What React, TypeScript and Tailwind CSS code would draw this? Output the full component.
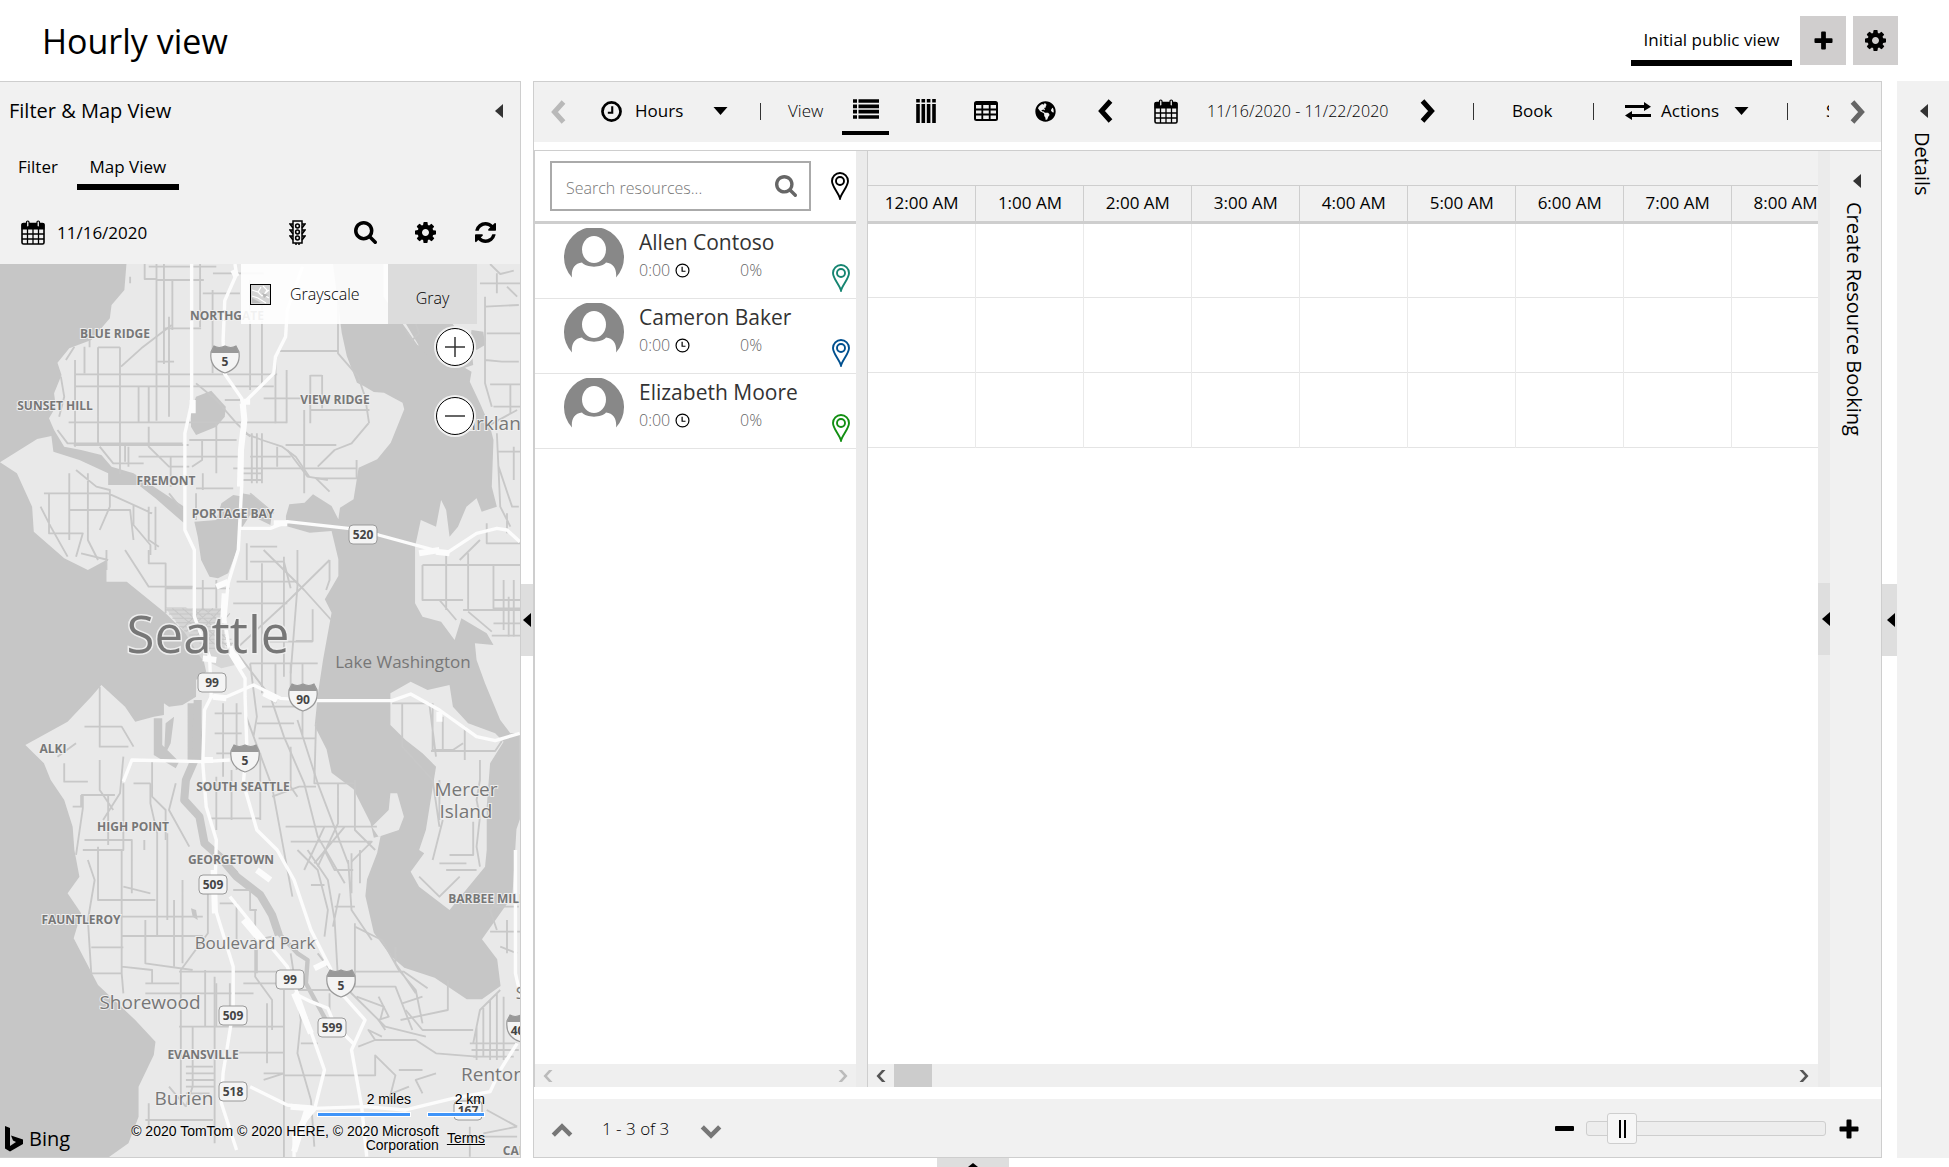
import React from "react";
import { FaGlobeAmericas } from "react-icons/fa";

const WATER = "#c6c6c6";
const LAND = "#e9e9e9";

type IconProps = { className?: string };

const CogIcon = ({ className }: IconProps) => (
  <svg viewBox="128 128 1536 1536" className={className} fill="currentColor" aria-hidden="true">
    <path d="M1152 896q0-106-75-181t-181-75-181 75-75 181 75 181 181 75 181-75 75-181zm512-109v222q0 12-8 23t-20 13l-185 28q-19 54-39 91 35 50 107 138 10 12 10 25t-9 23q-27 37-99 108t-94 71q-12 0-26-9l-138-108q-44 23-91 38-16 136-29 186-7 28-36 28h-222q-14 0-24.5-8.5t-11.5-21.5l-28-184q-49-16-90-37l-141 107q-10 9-25 9-14 0-25-11-126-114-165-168-7-10-7-23 0-12 8-23 15-21 51-66.5t54-70.5q-27-50-41-99l-183-27q-13-2-21-12.5t-8-23.5v-222q0-12 8-23t19-13l186-28q14-46 39-92-40-57-107-138-10-12-10-24 0-10 9-23 26-36 98.500-107.500t94.500-71.500q13 0 26 10l138 107q44-23 91-38 16-136 29-186 7-28 36-28h222q14 0 24.500 8.500t11.500 21.500l28 184q49 16 90 37l142-107q9-9 24-9 13 0 25 10 129 119 165 170 7 8 7 22 0 12-8 23-15 21-51 66.500t-54 70.500q26 50 41 98l183 28q13 2 21 12.500t8 23.500z" />
  </svg>
);

const SearchIcon = ({ className }: IconProps) => (
  <svg viewBox="64 128 1664 1664" className={className} fill="currentColor" aria-hidden="true">
    <path d="M1216 832q0-185-131.5-316.5t-316.5-131.5-316.5 131.5-131.5 316.5 131.5 316.5 316.5 131.5 316.5-131.5 131.5-316.5zm512 832q0 52-38 90t-90 38q-54 0-90-38l-343-342q-179 124-399 124-143 0-273.5-55.5t-225-150-150-225-55.5-273.5 55.5-273.5 150-225 225-150 273.5-55.5 273.5 55.5 225 150 150 225 55.5 273.5q0 220-124 399l343 343q37 37 37 90z" />
  </svg>
);

const RefreshIcon = ({ className }: IconProps) => (
  <svg viewBox="128 128 1536 1536" className={className} fill="currentColor" aria-hidden="true">
    <path d="M1639 1056q0 5-1 7-64 268-268 434.500t-478 166.500q-146 0-282.500-55t-243.500-157l-129 129q-19 19-45 19t-45-19-19-45v-448q0-26 19-45t45-19h448q26 0 45 19t19 45-19 45l-137 137q71 66 161 102t187 36q134 0 250-65t186-179q11-17 53-117 8-23 30-23h192q13 0 22.500 9.500t9.500 22.500zm25-800v448q0 26-19 45t-45 19h-448q-26 0-45-19t-19-45 19-45l138-138q-148-137-349-137-134 0-250 65t-186 179q-11 17-53 117-8 23-30 23h-199q-13 0-22.500-9.500t-9.500-22.500v-7q65-268 270-434.500t480-166.500q146 0 284 55.500t245 156.500l130-129q19-19 45-19t45 19 19 45z" />
  </svg>
);

const CalendarIcon = ({ className }: IconProps) => (
  <svg viewBox="0 0 24 25" className={className} fill="none" stroke="currentColor" aria-hidden="true">
    <rect x="1" y="3.500" width="22" height="20.500" rx="1.500" strokeWidth="1.600" />
    <path d="M.5 4.500q0-1.500 1.500-1.500h20q1.500 0 1.500 1.500v5H.5z" fill="currentColor" stroke="none" />
    <path d="M1 14h22M1 19h22M6.500 8v16M12 8v16M17.500 8v16" strokeWidth="1.300" />
    <rect x="5.500" y="1" width="2.500" height="6" rx="1.200" fill="#f1f1f1" strokeWidth="1.200" />
    <rect x="16" y="1" width="2.500" height="6" rx="1.200" fill="#f1f1f1" strokeWidth="1.200" />
  </svg>
);

const TrafficIcon = ({ className }: IconProps) => (
  <svg viewBox="0 0 17 25" className={className} fill="none" stroke="currentColor" strokeWidth="1.500" aria-hidden="true">
    <rect x="4" y="1" width="9" height="22" />
    <circle cx="8.500" cy="6" r="1.900" />
    <circle cx="8.500" cy="12" r="1.900" />
    <circle cx="8.500" cy="18" r="1.900" />
    <path d="M4 4H1l3 4M4 10H1l3 4M4 16H1l3 4M13 4h3l-3 4M13 10h3l-3 4M13 16h3l-3 4M7 25v-2M10 25v-2" />
  </svg>
);

const ChevronIcon = ({ className, dir }: IconProps & { dir: "left" | "right" | "up" | "down" }) => {
  const d = {
    left: "M16.500 2 7.500 12l9 10",
    right: "M7.500 2l9 10-9 10",
    up: "M2.500 16.500l9.500-9.500 9.500 9.500",
    down: "M2.500 7.500l9.500 9.500 9.500-9.500",
  }[dir];
  return (
    <svg viewBox="0 0 24 24" className={className} fill="none" stroke="currentColor" strokeWidth="5" aria-hidden="true">
      <path d={d} />
    </svg>
  );
};

const SmallChevron = ({ className, dir }: IconProps & { dir: "left" | "right" }) => (
  <svg viewBox="0 0 10 12" className={className} fill="currentColor" aria-hidden="true">
    <path d={dir === "left" ? "M6 0h3.500L4 6l5.500 6H6L.5 6z" : "M4 0H.5L6 6 .5 12H4l5.500-6z"} />
  </svg>
);

const ArrowLeft = ({ className }: IconProps) => (
  <svg viewBox="0 0 8 14" className={className} fill="currentColor" aria-hidden="true">
    <path d="M8 0v14L0 7z" />
  </svg>
);

const CaretDown = () => (
  <svg viewBox="0 0 14 8" className="h-2 w-[15px]" fill="currentColor" aria-hidden="true">
    <path d="M0 0h14L7 8z" />
  </svg>
);

const ClockIcon = ({ className, weight }: IconProps & { weight: number }) => (
  <svg viewBox="0 0 20 20" className={className} fill="none" stroke="currentColor" strokeWidth={weight} aria-hidden="true">
    <circle cx="10" cy="10" r="8.600" />
    {weight > 2 ? <path d="M10.700 5v6.200H6.500" strokeWidth="2" /> : <path d="M9.500 5v6H14" />}
  </svg>
);

const PinIcon = ({ className }: IconProps) => (
  <svg viewBox="0 0 18 28" className={className} fill="none" stroke="currentColor" strokeWidth="1.900" aria-hidden="true">
    <path d="M9 26.500C7.500 21 1 14.500 1 9a8 8 0 0 1 16 0c0 5.500-6.500 12-8 17.500z" />
    <circle cx="9" cy="9" r="4" />
  </svg>
);

const PlusIcon = ({ className }: IconProps) => (
  <svg viewBox="0 0 20 20" className={className} fill="currentColor" aria-hidden="true">
    <path d="M7.500 1.500q0-1 1-1h3q1 0 1 1v6h6q1 0 1 1v3q0 1-1 1h-6v6q0 1-1 1h-3q-1 0-1-1v-6h-6q-1 0-1-1v-3q0-1 1-1h6z" />
  </svg>
);

const ListIcon = () => (
  <svg viewBox="0 0 26 20" className="h-5 w-[26px]" stroke="currentColor" strokeWidth="3.700" aria-hidden="true">
    <path d="M0 2h4M0 7.300h4M0 12.600h4M0 18h4M5.500 2H26M5.500 7.300H26M5.500 12.600H26M5.500 18H26" />
  </svg>
);

const BarsIcon = () => (
  <svg viewBox="0 0 20 24" className="h-6 w-5" stroke="currentColor" strokeWidth="3.600" aria-hidden="true">
    <path d="M2 0v3.500M7.300 0v3.500M12.600 0v3.500M18 0v3.500M2 5v19M7.300 5v19M12.600 5v19M18 5v19" />
  </svg>
);

const TableIcon = () => (
  <svg viewBox="0 0 24 20" className="h-5 w-6" fill="none" stroke="currentColor" strokeWidth="2" aria-hidden="true">
    <rect x="1" y="1" width="22" height="18" rx="1.500" />
    <path d="M1 2.500h22" strokeWidth="3" />
    <path d="M1 8.500h22M1 13.500h22M8.300 3v16M15.700 3v16" strokeWidth="1.800" />
  </svg>
);

const ExchangeIcon = () => (
  <svg viewBox="0 0 26 18" className="h-[18px] w-[26px]" fill="currentColor" aria-hidden="true">
    <path d="M0 3h19V0l7 4.800L19 9V6H0zM26 12H7V9L0 13.500 7 18v-3h19z" />
  </svg>
);

const Avatar = () => (
  <svg viewBox="0 0 60 50" className="h-[50px] w-[60px] shrink-0" aria-hidden="true">
    <path
      d="M8 49.500A30 30 0 1 1 52 49.500C53 42 50 35 42 34.500 38 40 22 40 18 34.500 10 35 7 42 8 49.500z"
      fill="#888888"
    />
    <ellipse cx="30" cy="21.500" rx="12" ry="13.500" fill="#ffffff" />
  </svg>
);

/* ---------- Map drawing ---------- */

const minorStreets = [
  "M428 12v45h35M463 12v470M485 12v300M510 60v150M440 20h200M463 60h140M630 40h150M592 12v190M600 100h110M629 90v250M740 60v330M775 100v280",
  "M220 343h600M220 379h590M203 487h645M170 510l30 40h340M218 555h340M290 262v290M355 262v380M485 205h110M222 300v260M250 260v80M385 70v-20M500 170v300",
  "M465 305h50M358 320l60-55 90-70M410 379v110M440 379v110M290 262h65M265 240v22M195 300l25-40M180 350l10 60-15 60",
  "M820 273h180M815 290v200M848 330v160M918 345v145M953 345v100M918 347h35M918 450h175M1000 60v220l60 70 20 60 12 80M1090 490l-50 60-50 20-50 50M900 450v250M780 415h125",
  "M725 520l50 20 60 20 40 30 40 60M845 555h150M740 590h120M690 625h300M745 520v150M760 520v150M775 520v150M715 640h60M715 660h60M820 560v60M990 625h65v30h-120l40 40M1055 600v50",
  "M580 370l60 50 60 70 40 40M665 420h45M560 540h140M598 540v60l-30 20M640 490v150M505 590v90M410 590h300M440 500v60l60 60h60M370 555v50M295 560l40 50h90M380 560v60",
  "M205 640v200M225 630l60 50 40 10v50l-30 70M130 700h190M145 700v120h100l-20 70M205 750h180l10 90M260 640v200l30 60M120 740l30 60 50 90M320 700l130 60M395 735v60l50 60v30M440 740v100l30 20",
  "M460 740v130M500 700l40 50M580 685h110M580 700v80M600 640v50M740 700l70 60M850 570l60 80 60 10M740 860h80M730 850v20M780 870l120 120 80 90",
  "M740 905h100l20 80M775 910v390M840 890v360M880 870v110l-20 260M925 1048v95h-50M700 965h180M730 870v90M690 1030h160M975 900l-120 120-160 150M975 900v60l-10 30M740 1210h200M775 1145h150",
  "M315 870v60M370 870l70 110h140M440 870v40h50v150M240 880l80 20M580 985h100M600 960v90M640 960v90M490 985h80M490 1045h60l60 60",
  "M680 1150l120 160 40 120 60 140 40 160 80 140M740 1210l20 160-10 60M815 1210v120M860 1210v110M895 1210v220M760 1390h110M775 1340h110v-25M635 1360h80M635 1420h80M660 1330v220M700 1330v200M640 1480h90M765 1435h170M725 1360l80 220 60 330M880 1380l60 190 90 240",
  "M620 1675h150M640 1550v160M685 1530v150M770 1480v200M860 1460v120l20 30M805 1610l80-30h50M935 1390l-5 180h120v70M845 1700h270M860 1745h240l-60 60M1050 1560v150l60 60M960 1700l-60 130M1000 1570v120l-60 130M930 1810l90-110",
  "M295 1280v180h85M250 1400h110l35 60M225 1450l-55 40M190 1510v55h70M240 1605h100M215 1640h25v-35M295 1500v90l40 60M365 1490l-10 110-50 80M245 1605v40l-20 140M320 1605v150M365 1570v200h-120M290 1760v160h170M450 1500v110l40 40v90M520 1570l-20 80 60 110M395 1570h50",
  "M445 1570v60l20 90v140M495 1720v260M250 1740h140v160M360 1770v370l5 60M260 1800l20 60-20 120 10 160h90M360 1970h240M360 2028h240M270 2062h95M360 2120l90 10v40M365 1880l80 20M465 1850v180M427 1770v-30M430 1980v130l140 20",
  "M515 1920v200M540 1860v250M595 1900h20v120l-80 110v400M430 2170h100M530 2135h320M430 2200h320M607 2130v170M635 2150v500M530 2300h310M550 2420h80M550 2440h85M550 2460h85M550 2480h85M550 2500h70M570 2300v180l-20 60M500 2480l50 60M440 2530v70M430 2580h200",
  "M840 2190v580M755 1950v200l50 70v90M720 2170h120M690 1890h50v60h20M650 1930h50v130M755 1950v90l50-10M700 2378h140M840 2446h270v-60l60 60-20 80M790 2230v180M780 2440h60l-60 20M760 2140v-90M640 2170v130M680 2170v140",
  "M860 2080l30 200-10 100 40 140 10 140M890 2350h50M975 2200v60M880 2190h100M940 2080l60 80 60 60 80 80 120 30M1050 2000l80 40 50 90 50 60 20 100M1050 1990v190h120l50 130M1170 2060v50l60 90M1325 2160v90l-140 30M1045 2135h150l70 50M1055 2210l80 30-10 40",
  "M910 1770l60 90 20 120 10 180M960 1770l30 60h55M1040 1780v120M990 1940h60M880 1770l60 60 30 120-10 80M1030 1800l10 150 60 90M960 1875h-40M1005 1900l-20 100M1065 1770v100",
  "M1110 2340h120l60 40 120 10M1140 2310l-20-30 30-10-30-60M1200 2250l50 60h150M1250 2210l-60 20M1060 2360l50-20-20-30 40 20M1290 2440l-60 20 20 40M1180 2430h70M1160 2500l50-20",
  "M1390 2350h140M1395 2370h140M1400 2390h120M1410 2300v100M1430 2240v150M1450 2220v180M1470 2200v200M1490 2210v190M1400 2350l20-100 60-60M1440 2550l90 50M1390 2600v90M1430 2620l100-20M1380 2630h150",
  "M1450 12l30 30 40-10M1420 70h120M1435 110v260l20 70M1435 140l100-5M1400 12v60M1370 12v50l40 40M1435 300l50 5h50M1450 373h90M1510 373v90M1460 440h80M1440 500l90-50M1475 575h70M1520 560v100M1470 520l10 220 30 60M1475 620l40 120h20M1500 760v60M1200 210l20 30 20-20-10-30M1440 220h100M1470 40v60M1500 80l30 30",
  "M1250 915h290M1320 870v180M1385 880v170M1250 915v105h120M1460 915v130h80M1250 1020h50l50 60M1385 1055l70 60M1370 1050h170M1455 1127h85M1490 960v150M1505 1010v120M1520 960v170M1460 1020h80M1460 1090h80M1440 790v60h100M1360 900l60-60",
  "M1190 1330v130l90 100 20 140M1160 1330h110l20 160M1280 1330v140h60l30-20M1310 1370v100M1275 1473h190l20-30M1300 1560v120M1420 1500v60l-10 60 10 50-10 90 10 60M1330 1785h70v-100M1320 1830h90M1310 1680l-30 120M1300 1810h80M1240 1850l60 60 60-60M1375 1400v100",
  "M1450 2015h90M1470 2010l-20-60 50-50M1480 2060l50 20M1500 1980v100M1465 1940h70",
];

const highways = [
  "M695 12l5 30-35 80-5 120 5 100 50 73 10 55-10 90v120l-10 190-30 100-10 110 15 100 45 75v55l5 140-10 120 40 140 60 60 50 90 50 150 60 120",
  "M567 12v418l-20 90v290l28 60v200l45 120 5 120-20 40-5 160 10 130 30 100-5 200 55 180v130l-30 190-5 90 45 140",
  "M895 20l-45 130-5 80-30 60-5 50-85 85",
  "M710 805h90l50-20 180 20 90 20 200 55 90-60 60-15 30 5 38 35",
  "M620 1310h50l80-35 80 40 110 7h220l55-20 85 48 110 80 55 12 73-22",
  "M365 1565l25-65 210 5 80-5",
  "M680 1910l80 100 90 110 30 80 80 230-30 120-60 70v80M1010 2200l70 80-40 90 30 170 15 150",
  "M740 2480l110 55 80 10 150-5 120 10 140-35 110-20 30-65 50-80",
  "M870 2200l50 25 50 20 20 50 60 60M1525 1770v370l18 80",
];

const wideHighways = [
  "M718 430l5 50-10 90-3 110M690 30l10 20M640 980l35-15M600 1195l40 5M665 1000l-5 90M630 1310l40 5M600 1500h30M632 1830l4 130M720 1980l50 60M930 2125l40-20M860 2540l60 5-50 90M910 2545l-40 130M870 2200l50 120M1290 875l40 5M1240 880l60-10M720 425h20M850 790h-40M1300 1355v30M680 1160l40 65M780 1300l40 20M570 420v40M760 1830l40 30",
];

const districts: [string, number, number][] = [
  ["NORTHGATE", 227, 320],
  ["BLUE RIDGE", 115, 338],
  ["SUNSET HILL", 55, 410],
  ["VIEW RIDGE", 335, 404],
  ["FREMONT", 166, 485],
  ["PORTAGE BAY", 233, 518],
  ["ALKI", 53, 753],
  ["SOUTH SEATTLE", 243, 791],
  ["HIGH POINT", 133, 831],
  ["GEORGETOWN", 231, 864],
  ["FAUNTLEROY", 81, 924],
  ["BARBEE MILL", 487, 903],
  ["EVANSVILLE", 203, 1059],
  ["CAMPUS", 528, 1155],
];

const towns: [string, number, number, number][] = [
  ["Kirkland", 496, 430, 19],
  ["Mercer", 466, 796, 19],
  ["Island", 466, 818, 19],
  ["Boulevard Park", 255, 949, 17],
  ["Shorewood", 150, 1009, 19],
  ["Burien", 184, 1105, 19],
  ["Renton", 493, 1081, 19],
  ["Skyway", 543, 999, 16],
  ["Lake Washington", 403, 668, 17],
];

const stateRoutes: [string, number, number][] = [
  ["520", 363, 534],
  ["99", 212, 682],
  ["509", 213, 884],
  ["99", 290, 979],
  ["509", 233, 1015],
  ["599", 332, 1027],
  ["518", 233, 1091],
  ["167", 468, 1110],
];

const interstates: [string, number, number][] = [
  ["5", 225, 360],
  ["90", 303, 698],
  ["5", 245, 759],
  ["5", 341, 984],
  ["405", 521, 1029],
];

const CityMap = () => (
  <svg
    viewBox="0 264 520 893"
    preserveAspectRatio="xMinYMin slice"
    className="absolute inset-0 h-full w-full font-['Open_Sans',sans-serif]"
    role="img"
    aria-label="Map of Seattle"
  >
    <rect x="0" y="264" width="520" height="893" fill={LAND} />
    <g transform="translate(0 260) scale(.338 .33333)">
      <g fill={WATER}>
        <path d="M0 0L375 0 368 90 330 135 325 175 270 240 205 265 170 308 182 345 160 400 165 440 145 475 160 510 190 560 240 570 300 585 330 620 395 640 470 690 545 740 545 790 460 715 410 675 320 675 320 640 235 600 158 575 152 528 110 537 0 607 50 640 95 740 100 815 190 895 260 930 315 900 315 965 375 965 490 1060 560 1130 600 1190 610 1235 580 1260 580 1310 540 1335 500 1340 485 1330 485 1365 455 1370 400 1385 370 1340 300 1275 270 1310 200 1385 75 1455 130 1510 150 1560 190 1620 215 1700 220 1770 235 1850 200 1900 240 1960 218 2035 290 2175 400 2280 460 2345 455 2385 410 2480 410 2570 380 2650 310 2700 0 2700z" />
        <path d="M580 410l45-18 43 48-3 30-25 30-60 25-15-25v-50z" />
        <path d="M575 785l65-5 15-50 35-25 30 5-15 150-30 80-30 15-25-5-25-50-10-70z" />
        <path d="M715 700l30 5 60 50-5 40-60-30-25 40z" />
        <path d="M455 1375h25v80l50 50-10 20-65-40zM555 1330h40l5 180-45-10zM490 1390l25-20-10 80-20 40z" />
        <path d="M985 12h150v98l55 80 45 65 60 20 100 60-5 30 30 65 30 70 10 40-5 140 15 60-45 15-15-40-30 25-25 60-25 30-10-80-15-30-15 80-45-20-17 80v170l22 40 55 15 40 55 20-65 75 45 20 35-55-5 5 50 25 70 45 110 30 40 28-2v260l-10 30-12 200-90 130 45 60 10 80-55 40h-45l-95-65-90-30-40-35-50-70-25-110 5-50 30-80 10-50-20 5-10-45-50-100-65-50-15-70-35-70 10-100 15-100 25-140-20-40 40-70v-50l-20-85-65 5-70-20v-30l10-35 45-5 25-25 55 35 20 40 5-35 40-25 15-95 55-25 40-50 40-100-5-20-55-30-30-2-30-18-20-10-30-80-15-70z" />
        <path d="M1200 190l30-20 100 10 30 40 30-5 10 100-60 20-90-60z" />
        <path d="M1395 210l35 5 5 40-25 15-20-20zM565 1945l15 5 5 30-15-10z" />
      </g>
      <g fill="none" stroke={WATER} strokeLinejoin="round">
        <path strokeWidth="24" d="M585 1320l-5 170-30 70-5 60 45 50 15 80 45 40 50 60 70 55 35 60 20 60" />
        <path strokeWidth="13" d="M640 1780l60 60M815 2010l65 70 30 20-5 70 70 130" />
      </g>
      <path
        fill={LAND}
        d="M1155 1300l60-35 50 25 65-15 10 65 45 50 80 30 25 25-40 65-10 130v130l-5 50-105 130-90-70-25-45 40-55-15-10 20-60 30-190-40-40-50-40-45-45z"
      />
      <path fill={LAND} d="M1100 1700l50-50 5-50h20l20 70-15 40-60 20z" />
      <g fill="none" stroke="#c8c8c8" strokeWidth="5.500" strokeLinejoin="round">
        {minorStreets.map((d) => (
          <path key={d} d={d} />
        ))}
      </g>
      <path fill="#d6d6d6" d="M490 1045h170l5 120 30 50-40 10-60-30-50-80z" />
      <g fill="none" stroke="#c6c6c6" strokeWidth="3">
        <path d="M490 1050h165M500 1062h160M510 1075h150M520 1088h140M530 1100h130M545 1112h110M560 1125h110M575 1138h110M590 1150h100M605 1165h80M510 1045l140 120M540 1045l140 120M570 1045l110 100M600 1045l80 60M655 1045l-80 90M630 1045l-80 70M600 1045l-60 60M680 1060l-90 110" />
      </g>
      <g fill="none" stroke="#fcfcfc" strokeWidth="10" strokeLinejoin="round">
        {highways.map((d) => (
          <path key={d} d={d} />
        ))}
      </g>
      <g fill="none" stroke="#fcfcfc" strokeWidth="18" strokeLinejoin="round">
        {wideHighways.map((d) => (
          <path key={d} d={d} />
        ))}
      </g>
    </g>

    <g textAnchor="middle" fill="#777777" stroke="#eeeeee" strokeWidth="2" style={{ paintOrder: "stroke" }}>
      <g fontSize="12" fontWeight="700">
        {districts.map(([t, x, y]) => (
          <text key={t} x={x} y={y}>
            {t}
          </text>
        ))}
      </g>
      {towns.map(([t, x, y, s]) => (
        <text key={t} x={x} y={y} fontSize={s} stroke={t === "Lake Washington" ? "none" : undefined}>
          {t}
        </text>
      ))}
      <text x="208" y="653" fontSize="51" strokeWidth="3">
        Seattle
      </text>
    </g>

    <g textAnchor="middle" fontSize="12" fontWeight="700">
      {stateRoutes.map(([t, x, y]) => (
        <g key={`${t}-${x}-${y}`}>
          <rect x={x - 14} y={y - 9} width="28" height="19" rx="4" fill="#f4f4f4" stroke="#9a9a9a" />
          <text x={x} y={y + 5} fill="#444444">
            {t}
          </text>
        </g>
      ))}
      {interstates.map(([t, x, y]) => (
        <g key={`${t}-${x}-${y}`}>
          <path
            d={`M${x - 11} ${y - 14}q5 3 11 0q6 3 11 0l3 6q2 16-14 21q-16-5-14-21z`}
            fill="#f4f4f4"
            stroke="#999999"
            strokeWidth="1.200"
          />
          <path d={`M${x - 11} ${y - 14}q5 3 11 0q6 3 11 0l3 7h-28z`} fill="#999999" />
          <text x={x} y={y + 6} fill="#444444">
            {t}
          </text>
        </g>
      ))}
    </g>
  </svg>
);

const MapPane = () => (
  <div className="relative min-h-0 flex-1 overflow-hidden">
    <CityMap />
    <div className="absolute right-[43px] top-0 flex h-[60px] text-base font-light text-black">
      <button className="flex w-[147px] items-center gap-[19px] bg-white/90 pl-[9px]">
        <svg viewBox="0 0 21 21" className="h-[21px] w-[21px]" aria-hidden="true">
          <rect x=".5" y=".5" width="20" height="20" fill="#d4d4d4" stroke="#000" />
          <path d="M2 12l6 2 8 5M2 6l6 2 3-5M8 8l4 4 7-6M13 2l4 4-3 5 5 3" fill="none" stroke="#fff" strokeWidth="1.200" />
          <path d="M2 14l9 5H2zM12 9l6 2-4 3z" fill="#b9b9b9" />
        </svg>
        Grayscale
      </button>
      <button className="w-[89px] bg-[#dcdcdc] pt-2">Gray</button>
    </div>
    <div className="absolute right-[46px] top-[64px] flex flex-col gap-[31px]">
      {["Zoom in", "Zoom out"].map((name) => (
        <button
          key={name}
          aria-label={name}
          className="flex h-[38px] w-[38px] items-center justify-center rounded-full border border-black bg-white shadow-[0_0_0_2px_#f1f1f1]"
        >
          <svg viewBox="0 0 20 20" className="h-5 w-5" stroke="#333" strokeWidth="1.500" aria-hidden="true">
            <path d={name === "Zoom in" ? "M0 10h20M10 0v20" : "M0 10h20"} />
          </svg>
        </button>
      ))}
    </div>
    <div className="absolute bottom-[5px] left-[5px] flex items-center gap-[6px]">
      <svg viewBox="0 0 18 26" className="h-[26px] w-[18px]" aria-hidden="true">
        <path d="M0 0l5 2v18l6-4-3-1.500-2-5 12 4V18L5 25.500 0 22.500z" />
      </svg>
      <span className="text-xl leading-6">Bing</span>
    </div>
    <div className="absolute bottom-[5px] right-[35px] flex flex-col items-end font-['Liberation_Sans',sans-serif] text-[14px] leading-[14px] text-black [text-shadow:0_0_2px_#fff]">
      <div className="mb-[7px] flex gap-4 text-right">
        <div>
          2 miles
          <div className="mt-[6px] h-[5px] w-[94px] border border-white bg-[#3f94f8]" />
        </div>
        <div>
          2 km
          <div className="mt-[6px] h-[5px] w-[58px] border border-white bg-[#3f94f8]" />
        </div>
      </div>
      <div className="flex items-center gap-2">
        <p className="w-[320px] text-right">© 2020 TomTom © 2020 HERE, © 2020 Microsoft Corporation</p>
        <a href="#terms" className="underline">
          Terms
        </a>
      </div>
    </div>
  </div>
);

/* ---------- Panels ---------- */

const FilterPanel = () => (
  <aside className="flex w-[521px] shrink-0 flex-col border-y border-r border-[#cecece] bg-[#f1f1f1]">
    <div className="flex h-14 shrink-0 items-center justify-between pl-[9px] pr-[17px] pt-px">
      <h2 className="text-xl">Filter &amp; Map View</h2>
      <button aria-label="Collapse panel">
        <ArrowLeft className="h-[14px] w-2 text-[#333]" />
      </button>
    </div>
    <div className="flex h-[52px] shrink-0 items-end gap-[19px] pl-[18px] text-[17px]">
      <button className="h-[46px] pb-0">Filter</button>
      <button className="h-[46px] w-[102px] border-b-6 border-black pt-[6px]">Map View</button>
    </div>
    <div className="flex h-[74px] shrink-0 items-center pl-[21px] pr-6 pt-[11px]">
      <button className="flex items-center gap-3 text-[17px]">
        <CalendarIcon className="h-[25px] w-6" />
        11/16/2020
      </button>
      <div className="ml-auto flex items-center">
        <button aria-label="Traffic" className="mr-[48px]">
          <TrafficIcon className="h-[25px] w-[17px]" />
        </button>
        <button aria-label="Search map" className="mr-[38px]">
          <SearchIcon className="h-[23px] w-[23px]" />
        </button>
        <button aria-label="Map settings" className="mr-[39px]">
          <CogIcon className="h-[21px] w-[21px]" />
        </button>
        <button aria-label="Refresh">
          <RefreshIcon className="h-[21px] w-[21px]" />
        </button>
      </div>
    </div>
    <MapPane />
  </aside>
);

const Separator = () => <span className="h-[17px] w-px shrink-0 bg-[#333]" />;

const Toolbar = () => (
  <div className="flex h-[60px] shrink-0 items-center bg-[#f1f1f1] text-[17px]">
    <button aria-label="Scroll toolbar left" className="ml-[13px] shrink-0 text-[#b9b9b9]">
      <ChevronIcon dir="left" className="h-6 w-6" />
    </button>
    <div className="flex h-full min-w-0 flex-1 items-center overflow-hidden pb-[2px]">
      <button className="ml-[30px] flex w-[127px] shrink-0 items-center">
        <ClockIcon className="mr-[13px] h-[21px] w-[21px]" weight={2.6} />
        Hours
        <span className="ml-auto">
          <CaretDown />
        </span>
      </button>
      <span className="ml-8 flex">
        <Separator />
      </span>
      <span className="ml-[27px] w-[54px] shrink-0 font-light">View</span>
      <div className="flex shrink-0 gap-[13px]">
        <button aria-label="List view" className="flex h-12 w-[47px] items-center justify-center border-b-4 border-black">
          <ListIcon />
        </button>
        <button aria-label="Column view" className="flex w-[47px] items-center justify-center">
          <BarsIcon />
        </button>
        <button aria-label="Grid view" className="flex w-[47px] items-center justify-center">
          <TableIcon />
        </button>
        <button aria-label="Map view" className="flex w-[47px] items-center justify-center">
          <FaGlobeAmericas className="h-[21px] w-[21px]" />
        </button>
        <button aria-label="Previous" className="flex w-[47px] items-center justify-center">
          <ChevronIcon dir="left" className="h-6 w-6" />
        </button>
        <button aria-label="Pick date" className="flex w-[47px] items-center justify-center">
          <CalendarIcon className="h-[25px] w-6" />
        </button>
      </div>
      <span className="ml-[18px] w-[200px] shrink-0 whitespace-nowrap text-base font-light">11/16/2020 - 11/22/2020</span>
      <button aria-label="Next" className="ml-[8px] shrink-0">
        <ChevronIcon dir="right" className="h-6 w-6" />
      </button>
      <span className="ml-[34px] flex">
        <Separator />
      </span>
      <button className="ml-[38px] w-[81px] shrink-0 text-left">Book</button>
      <Separator />
      <button className="ml-[31px] mr-[38px] flex w-[124px] shrink-0 items-center">
        <span className="mr-[10px]">
          <ExchangeIcon />
        </span>
        Actions
        <span className="ml-auto">
          <CaretDown />
        </span>
      </button>
      <Separator />
      <button className="ml-[38px] shrink-0">Settings</button>
    </div>
    <button aria-label="Scroll toolbar right" className="ml-4 mr-3 shrink-0 text-[#666]">
      <ChevronIcon dir="right" className="h-6 w-6" />
    </button>
  </div>
);

const resources = [
  { name: "Allen Contoso", pin: "text-[#168571]" },
  { name: "Cameron Baker", pin: "text-[#00508f]" },
  { name: "Elizabeth Moore", pin: "text-[#128f12]" },
];

const ResourceList = () => (
  <section className="flex w-[321px] shrink-0 flex-col bg-white">
    <div className="flex h-[73px] shrink-0 items-center border-b-3 border-[#cecece] pl-[15px]">
      <label className="flex h-[50px] w-[261px] items-center border-2 border-[#aaaaaa] bg-white pl-[14px] pr-3">
        <input
          type="text"
          aria-label="Search resources"
          placeholder="Search resources..."
          className="w-full min-w-0 pt-1 text-[16px] font-light outline-none placeholder:text-[#777]"
        />
        <SearchIcon className="h-[22px] w-[22px] shrink-0 text-[#666]" />
      </label>
      <button aria-label="Show pins" className="ml-[20px]">
        <PinIcon className="h-7 w-[18px]" />
      </button>
    </div>
    {resources.map((r) => (
      <div key={r.name} className="flex h-[75px] shrink-0 border-b border-[#e4e4e4] pl-[29px] pt-1">
        <Avatar />
        <div className="ml-[15px] flex-1">
          <div className="text-[21px] leading-[28px] text-[#333]">{r.name}</div>
          <div className="flex items-center text-base leading-[28px] font-light text-[#666]">
            <span className="w-[36px]">0:00</span>
            <ClockIcon className="h-[15px] w-[15px] text-black" weight={1.6} />
            <span className="ml-[50px]">0%</span>
          </div>
        </div>
        <PinIcon className={`mr-[6px] mt-9 h-7 w-[18px] shrink-0 ${r.pin}`} />
      </div>
    ))}
    <div className="mt-auto flex h-[23px] shrink-0 items-center justify-between bg-[#efefef] px-2 text-[#bbb]">
      <button aria-label="Scroll list left">
        <SmallChevron dir="left" className="h-3 w-[10px]" />
      </button>
      <button aria-label="Scroll list right">
        <SmallChevron dir="right" className="h-3 w-[10px]" />
      </button>
    </div>
  </section>
);

const hours = ["12:00 AM", "1:00 AM", "2:00 AM", "3:00 AM", "4:00 AM", "5:00 AM", "6:00 AM", "7:00 AM", "8:00 AM", "9:00 AM", "10:00 AM", "11:00 AM", "12:00 PM"];

const Timeline = () => (
  <section className="flex min-w-0 flex-1 flex-col border-l border-[#cecece] bg-white">
    <div className="min-h-0 flex-1 overflow-hidden">
      <table className="w-[1404px] table-fixed border-collapse">
        <thead className="bg-[#f1f1f1]">
          <tr className="h-[34px] border-b border-[#cecece]">
            <th colSpan={hours.length} />
          </tr>
          <tr className="h-[37px] border-b-3 border-[#cecece]">
            {hours.map((h) => (
              <th key={h} className="w-[108px] border-r border-[#cecece] p-0 text-[17px] leading-6 font-normal">
                {h}
              </th>
            ))}
          </tr>
        </thead>
        <tbody>
          {resources.map((r) => (
            <tr key={r.name} className="h-[75px] border-b border-[#e4e4e4]">
              {hours.map((h) => (
                <td key={h} className="border-r border-[#eaeaea] p-0" />
              ))}
            </tr>
          ))}
        </tbody>
      </table>
    </div>
    <div className="flex h-[23px] shrink-0 items-center bg-[#efefef] text-[#555]">
      <button aria-label="Scroll timeline left" className="pl-2 pr-2">
        <SmallChevron dir="left" className="h-3 w-[10px]" />
      </button>
      <span className="h-full w-[38px] bg-[#cccccc]" />
      <button aria-label="Scroll timeline right" className="ml-auto pr-[9px]">
        <SmallChevron dir="right" className="h-3 w-[10px]" />
      </button>
    </div>
  </section>
);

const CollapseHandle = ({ label, className }: { label: string; className: string }) => (
  <button aria-label={label} className={`flex h-[72px] shrink-0 items-center bg-[#dedede] ${className}`}>
    <ArrowLeft className="h-[14px] w-2" />
  </button>
);

const Footer = () => (
  <div className="mt-3 flex h-[58px] shrink-0 items-center bg-[#f1f1f1]">
    <button aria-label="Previous page" className="ml-[16px] pt-[6px] text-[#777]">
      <ChevronIcon dir="up" className="h-[22px] w-6" />
    </button>
    <span className="ml-[28px] w-[70px] whitespace-nowrap pt-[2px] text-[17px] font-light">1 - 3 of 3</span>
    <button aria-label="Next page" className="ml-[27px] pt-[6px] text-[#777]">
      <ChevronIcon dir="down" className="h-[22px] w-6" />
    </button>
    <div className="ml-auto mr-[22px] flex items-center pt-px">
      <button aria-label="Zoom timeline out" className="py-2">
        <span className="block h-[5px] w-[19px] rounded-[1px] bg-black" />
      </button>
      <div className="relative ml-3 mr-[13px] flex h-[15px] w-[240px] items-center rounded-[3px] border border-[#cecece] bg-[#ededed]">
        <input type="range" aria-label="Timeline zoom" defaultValue={10} className="absolute inset-0 w-full opacity-0" />
        <span className="pointer-events-none ml-[20px] flex h-[31px] w-[30px] shrink-0 items-center justify-center gap-[3px] rounded-[3px] border border-[#cecece] bg-[#f6f6f6]">
          <span className="h-[18px] w-[2px] bg-black" />
          <span className="h-[18px] w-[2px] bg-black" />
        </span>
      </div>
      <button aria-label="Zoom timeline in">
        <PlusIcon className="h-5 w-5" />
      </button>
    </div>
  </div>
);

const Board = () => (
  <main className="flex min-w-0 flex-1 flex-col border border-[#cecece] bg-white">
    <Toolbar />
    <div className="mt-2 flex min-h-0 flex-1 border-l border-t border-[#cecece]">
      <ResourceList />
      <div className="w-[11px] shrink-0 bg-[#ebebeb]" />
      <Timeline />
      <div className="flex w-3 shrink-0 flex-col bg-[#ebebeb]">
        <CollapseHandle label="Expand booking panel" className="mt-[432px] w-3 pl-1" />
      </div>
      <button className="flex w-[51px] shrink-0 flex-col items-start bg-[#f1f1f1] pl-[11px] pt-[23px] text-xl">
        <ArrowLeft className="ml-[12px] h-[14px] w-2 text-[#333]" />
        <span className="mt-[14px] whitespace-nowrap leading-[26px] [writing-mode:vertical-rl]">Create Resource Booking</span>
      </button>
    </div>
    <Footer />
  </main>
);

export default function App() {
  return (
    <div className="flex h-screen min-h-[700px] flex-col overflow-hidden bg-white font-['Open_Sans',sans-serif] text-black">
      <header className="flex h-[81px] shrink-0 items-start pl-[42px] pr-[51px] pt-4">
        <h1 className="text-[34px] leading-[50px]">Hourly view</h1>
        <button className="ml-auto mr-2 h-[50px] w-[161px] border-b-6 border-black pt-1 text-[17px]">Initial public view</button>
        <button aria-label="Add view" className="mr-[7px] flex h-[49px] w-[46px] items-center justify-center bg-[#d0cece]">
          <PlusIcon className="h-[19px] w-[19px]" />
        </button>
        <button aria-label="Settings" className="flex h-[49px] w-[45px] items-center justify-center bg-[#d0cece]">
          <CogIcon className="h-[21px] w-[21px]" />
        </button>
      </header>
      <div className="flex min-h-0 flex-1">
        <FilterPanel />
        <div className="flex w-3 shrink-0 flex-col">
          <CollapseHandle label="Collapse filter panel" className="mt-[503px] w-3 pl-[2px]" />
        </div>
        <Board />
        <div className="flex w-[15px] shrink-0 flex-col">
          <CollapseHandle label="Expand details panel" className="mt-[503px] w-[15px] pl-[5px]" />
        </div>
        <button className="flex w-[52px] shrink-0 flex-col items-start bg-[#f1f1f1] pl-3 pt-[23px] text-xl">
          <ArrowLeft className="ml-[11px] h-[14px] w-2 text-[#333]" />
          <span className="mt-[14px] leading-[26px] [writing-mode:vertical-rl]">Details</span>
        </button>
      </div>
      <div className="flex h-[9px] shrink-0 justify-center pr-[3px]">
        <button aria-label="Expand bottom panel" className="flex w-[72px] items-end justify-center bg-[#dedede]">
          <svg viewBox="0 0 14 4" className="h-1 w-[14px]" aria-hidden="true">
            <path d="M7 0l5 4H2z" />
          </svg>
        </button>
      </div>
    </div>
  );
}
